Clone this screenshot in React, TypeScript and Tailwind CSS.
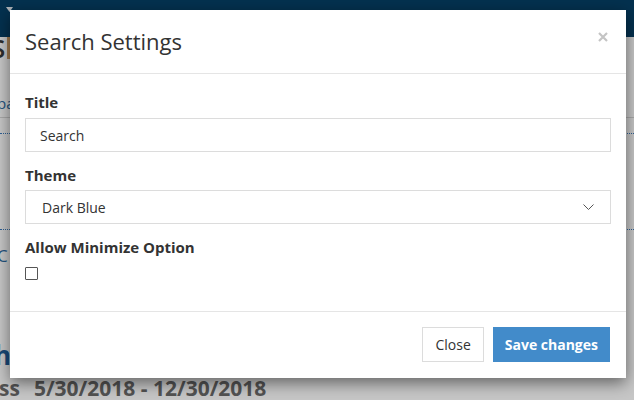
import * as React from "react";

// page behind the backdrop, only its edges are visible
function PageBehind() {
  return (
    <div className="flex flex-col">
      <div className="h-[37px] bg-[#063f66] pl-[6px] pt-[7px]">
        <svg width="7" height="5" viewBox="0 0 7 5">
          <path d="M0 0h7L3.5 5z" fill="#dfe6ec" />
        </svg>
      </div>
      <div className="flex h-[22px] items-center">
        <span className="-ml-[9px] text-[26px] font-semibold leading-[22px] text-[#3a3a3a]">S</span>
        <div className="ml-[2px] h-[22px] w-[3px] bg-[#d3a06a]" />
      </div>
      <div className="mt-[34px] flex h-[20px] items-center">
        <span className="-ml-[3px] text-[15px] leading-[20px] text-[#2e6da4]">pa</span>
      </div>
      <div className="mt-[4px] border-b border-[#d9d9d9]" />
      <div className="mt-[15px] border-b border-dotted border-[#3b7bbf]" />
      <div className="mt-[95px] border-b border-dotted border-[#3b7bbf]" />
      <div className="mt-[16px] flex h-[20px] items-center">
        <span className="-ml-[3px] text-[17px] leading-[20px] text-[#2e6da4]">C</span>
      </div>
      <div className="mt-[76px] flex h-[26px] items-center">
        <span className="-ml-[6px] text-[26px] font-bold leading-[26px] text-[#1f5f9a]">h</span>
      </div>
      <div className="mt-[8px] flex h-[24px] items-center gap-[14px] text-[21px] font-bold leading-[24px] text-[#6b6b6b]">
        <span className="-ml-[1px]">ss</span>
        <span>5/30/2018 - 12/30/2018</span>
      </div>
    </div>
  );
}

function SearchSettingsModal() {
  return (
    <div className="absolute left-[10px] top-[10px] flex h-[368px] w-[616px] flex-col bg-white text-[#333] shadow-[0_5px_15px_rgba(0,0,0,0.5)]">
      {/* header */}
      <div className="flex h-[64px] shrink-0 items-center justify-between border-b border-[#e5e5e5] pl-[15px] pr-[18px]">
        <h4 className="text-[22px] leading-[33px] font-normal">Search Settings</h4>
        <button className="-mt-[10px] flex h-[10px] w-[10px] items-center justify-center">
          <svg width="10" height="10" viewBox="0 0 10 10">
            <path d="M1 1l8 8M9 1l-8 8" stroke="#c4c4c4" strokeWidth="2.2" />
          </svg>
        </button>
      </div>

      {/* body */}
      <div className="flex-1 px-[15px] pt-[18px]">
        <label className="block text-[15px] font-bold leading-[20px]">Title</label>
        <div className="mt-[6px] flex h-[34px] items-center border border-[#dcdcdc] px-[14px] text-[14px]">
          Search
        </div>

        <label className="mt-[13px] block text-[15px] font-bold leading-[20px]">Theme</label>
        <div className="mt-[5px] flex h-[34px] items-center justify-between border border-[#dcdcdc] pl-[16px] pr-[16px] text-[14px]">
          <span>Dark Blue</span>
          <svg width="11" height="7" viewBox="0 0 11 7">
            <path d="M0.5 0.5l5 5 5-5" fill="none" stroke="#555" strokeWidth="1" />
          </svg>
        </div>

        <label className="mt-[13px] block text-[15px] font-bold leading-[20px]">Allow Minimize Option</label>
        <div className="mt-[10px] h-[13px] w-[13px] rounded-[1px] border border-[#555] bg-white" />
      </div>

      {/* footer */}
      <div className="flex h-[67px] shrink-0 items-start justify-end gap-[9px] border-t border-[#e5e5e5] px-[16px] pt-[15px]">
        <button className="flex h-[35px] items-center border border-[#dcdcdc] bg-white px-[12px] text-[14px] text-[#333]">
          Close
        </button>
        <button className="flex h-[35px] items-center bg-[#428bca] px-[12px] text-[14px] font-bold text-white">
          Save changes
        </button>
      </div>
    </div>
  );
}

export default function App() {
  return (
    <div className="relative h-[400px] w-[634px] overflow-hidden bg-white font-['Open_Sans',sans-serif]">
      <PageBehind />
      <div className="absolute inset-0 bg-black/[0.22]" />
      <SearchSettingsModal />
    </div>
  );
}
